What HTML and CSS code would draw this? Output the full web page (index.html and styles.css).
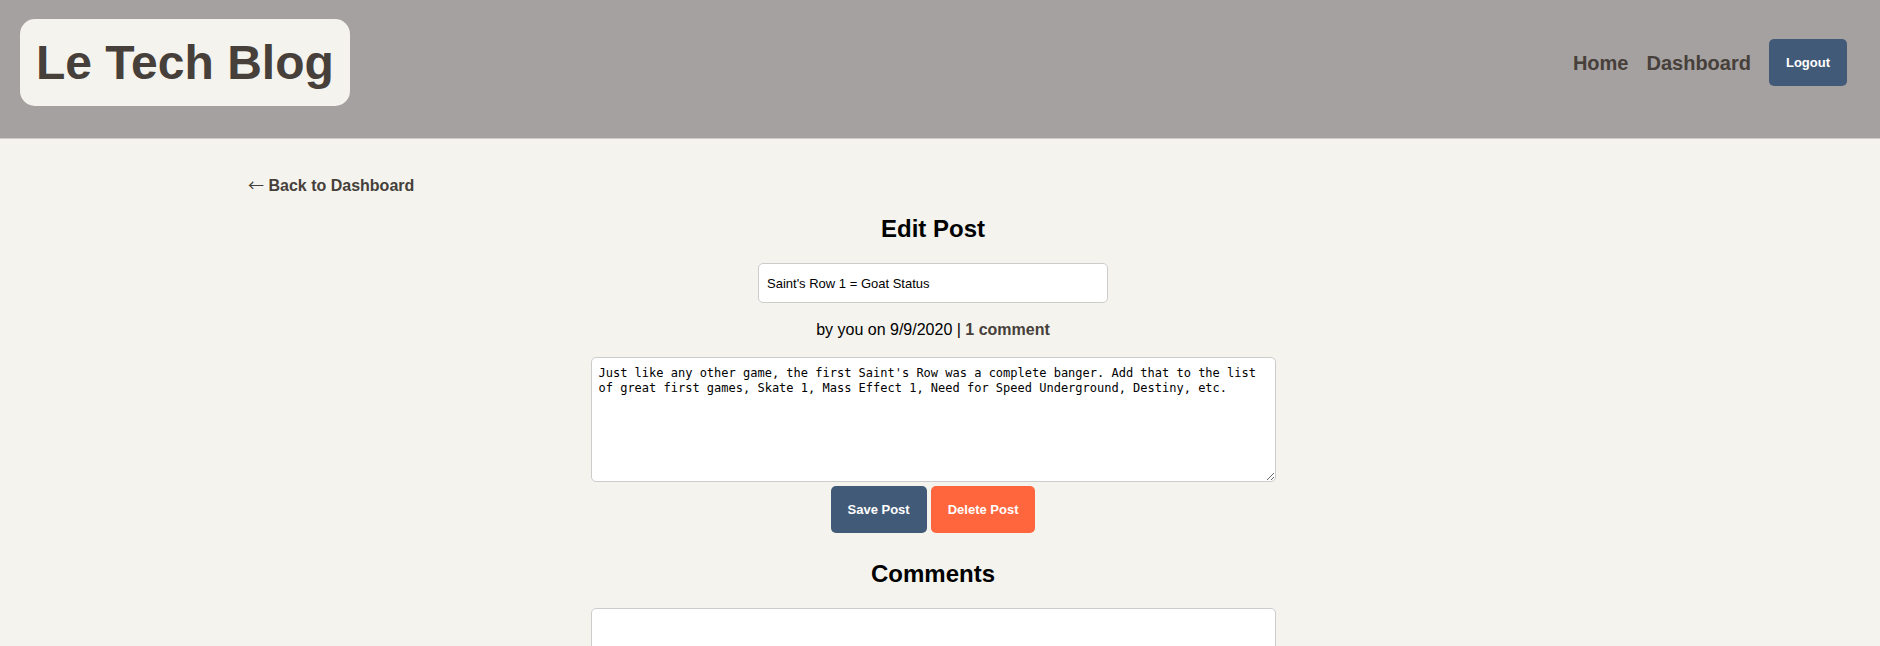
FILE: index.html
```
<!DOCTYPE html>
<html lang="en">
<head>
  <meta charset="utf-8">
  <meta name="viewport" content="width=device-width, initial-scale=1">
  <title>Le Tech Blog</title>
  <link rel="stylesheet" href="styles.css">
</head>
<body>
  <header class="site-header">
    <h1 class="site-title"><a href="#">Le Tech Blog</a></h1>
    <nav class="site-nav">
      <a href="#">Home</a>
      <a href="#">Dashboard</a>
      <button type="button" class="btn">Logout</button>
    </nav>
  </header>
  <main class="page">
    <a class="back-link" href="#"><span class="arrow">←</span> Back to Dashboard</a>
    <form class="post-form">
      <h2 class="heading">Edit Post</h2>
      <input class="field post-title" type="text" aria-label="Post title" value="Saint's Row 1 = Goat Status">
      <p class="meta">by you on 9/9/2020 | <a href="#comments">1 comment</a></p>
      <textarea class="field post-body" aria-label="Post content" spellcheck="false">Just like any other game, the first Saint's Row was a complete banger. Add that to the list of great first games, Skate 1, Mass Effect 1, Need for Speed Underground, Destiny, etc.</textarea>
      <div class="actions">
        <button type="submit" class="btn">Save Post</button>
        <button type="button" class="btn btn-danger">Delete Post</button>
      </div>
    </form>
    <form class="comment-form" id="comments">
      <h2 class="heading">Comments</h2>
      <textarea class="field post-body" aria-label="Add a comment"></textarea>
    </form>
  </main>
</body>
</html>
```
FILE: styles.css
```
* {
  box-sizing: border-box;
}

html {
  scrollbar-width: none;
}

body {
  margin: 0;
  background: #f4f3ee;
  color: #000;
  font: 16px/18px "Liberation Sans", Arial, sans-serif;
}

a {
  color: #463f3a;
  font-weight: bold;
  text-decoration: none;
}

.site-header {
  display: flex;
  justify-content: space-between;
  align-items: center;
  padding: 19px 33px 32px 20px;
  background: #a5a1a0;
  border-bottom: 1px solid #ccc;
}

.site-title {
  margin: 0;
  padding: 16px;
  border-radius: 15px;
  background: #f4f3ee;
  font-size: 48px;
  line-height: 55px;
}

.site-nav {
  display: flex;
  align-items: center;
  gap: 18px;
  font-size: 20px;
  line-height: 22px;
}

.btn {
  padding: 16px 17px;
  border: 0;
  border-radius: 5px;
  background: #415a77;
  color: #fff;
  font: bold 13px/15px "Liberation Sans", Arial, sans-serif;
}

.btn-danger {
  background: #ff663d;
}

.page {
  padding: 38px 262px 0 248px;
}

.back-link {
  display: block;
}

.arrow {
  font-family: "Noto Sans CJK JP", sans-serif;
  font-weight: normal;
  line-height: 1px;
}

.post-form,
.comment-form {
  display: flex;
  flex-direction: column;
  align-items: center;
}

.heading {
  margin: 20px 0;
  font-size: 24px;
  line-height: 28px;
}

.field {
  display: block;
  border: 1px solid #ccc;
  border-radius: 5px;
  background: #fff;
  color: #000;
}

.post-title {
  width: 350px;
  height: 40px;
  padding: 8px;
  font: 13px/16px "Liberation Sans", Arial, sans-serif;
}

.meta {
  margin: 18px 0;
}

.post-body {
  width: 50%;
  height: 125px;
  padding: 8px 7px;
  font: 12px/15px "DejaVu Sans Mono", monospace;
}

.actions {
  display: flex;
  gap: 4px;
  margin: 4px 0 7px;
}
```
